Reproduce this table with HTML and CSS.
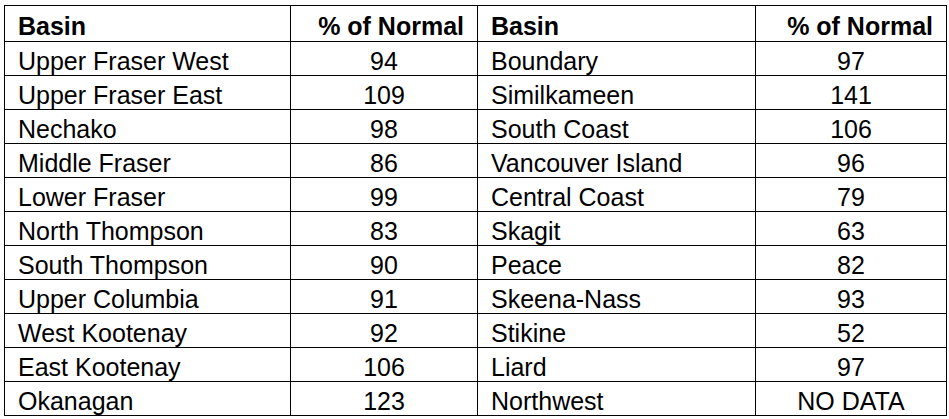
FILE: index.html
```html
<!DOCTYPE html>
<html>
<head>
<meta charset="utf-8">
<link rel="stylesheet" href="styles.css">
</head>
<body>
<table class="basins">
  <colgroup>
    <col class="c-name1"><col class="c-pct1"><col class="c-name2"><col class="c-pct2">
  </colgroup>
  <thead>
    <tr><th class="name">Basin</th><th class="pct">% of Normal</th><th class="name">Basin</th><th class="pct">% of Normal</th></tr>
  </thead>
  <tbody>
    <tr><td class="name">Upper Fraser West</td><td class="pct">94</td><td class="name">Boundary</td><td class="pct">97</td></tr>
    <tr><td class="name">Upper Fraser East</td><td class="pct">109</td><td class="name">Similkameen</td><td class="pct">141</td></tr>
    <tr><td class="name">Nechako</td><td class="pct">98</td><td class="name">South Coast</td><td class="pct">106</td></tr>
    <tr><td class="name">Middle Fraser</td><td class="pct">86</td><td class="name">Vancouver Island</td><td class="pct">96</td></tr>
    <tr><td class="name">Lower Fraser</td><td class="pct">99</td><td class="name">Central Coast</td><td class="pct">79</td></tr>
    <tr><td class="name">North Thompson</td><td class="pct">83</td><td class="name">Skagit</td><td class="pct">63</td></tr>
    <tr><td class="name">South Thompson</td><td class="pct">90</td><td class="name">Peace</td><td class="pct">82</td></tr>
    <tr><td class="name">Upper Columbia</td><td class="pct">91</td><td class="name">Skeena-Nass</td><td class="pct">93</td></tr>
    <tr><td class="name">West Kootenay</td><td class="pct">92</td><td class="name">Stikine</td><td class="pct">52</td></tr>
    <tr><td class="name">East Kootenay</td><td class="pct">106</td><td class="name">Liard</td><td class="pct">97</td></tr>
    <tr><td class="name">Okanagan</td><td class="pct">123</td><td class="name">Northwest</td><td class="pct">NO DATA</td></tr>
  </tbody>
</table>
</body>
</html>
```
FILE: styles.css
```css
html, body {
  margin: 0;
  padding: 0;
  background: #ffffff;
}
body {
  padding: 5px 0 0 4px;
  font-family: "Liberation Sans", Arial, sans-serif;
  color: #000;
}
.basins {
  border-collapse: collapse;
  table-layout: fixed;
  width: 943px;
  font-size: 25px;
}
.c-name1 { width: 286px; }
.c-pct1 { width: 187px; }
.c-name2 { width: 278px; }
.c-pct2 { width: 191px; }
.basins th, .basins td {
  border: 1px solid #000;
  height: 34px;
  padding: 4px 13px 0;
  line-height: 26px;
  box-sizing: border-box;
  white-space: nowrap;
  vertical-align: middle;
}
.basins th {
  font-weight: bold;
  height: 36px;
}
.basins th.name, .basins td.name { text-align: left; }
.basins th.pct { text-align: right; }
.basins td.pct { text-align: center; }
```
